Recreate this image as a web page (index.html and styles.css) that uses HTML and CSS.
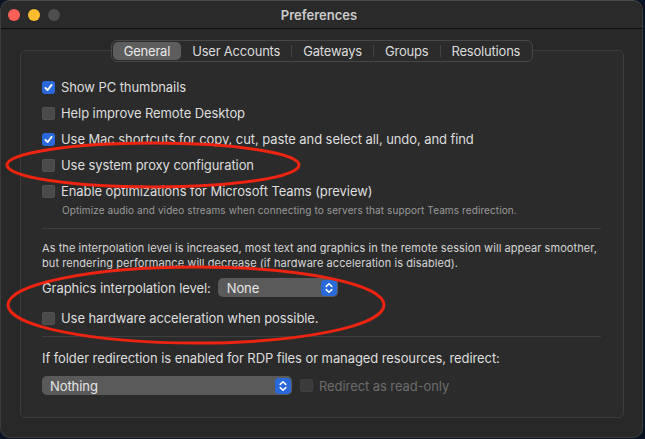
FILE: index.html
```html
<!DOCTYPE html>
<html>
<head>
<meta charset="utf-8">
<link rel="stylesheet" href="styles.css">
</head>
<body>
<div class="window">
  <div class="titlebar">
    <div class="lights">
      <span class="light red"></span>
      <span class="light yellow"></span>
      <span class="light gray"></span>
    </div>
    <div class="title">Preferences</div>
  </div>
  <div class="content">
    <div class="box">
      <div class="tabs">
        <div class="seg active">General</div>
        <div class="seg">User Accounts</div>
        <div class="sep"></div>
        <div class="seg">Gateways</div>
        <div class="sep"></div>
        <div class="seg">Groups</div>
        <div class="sep"></div>
        <div class="seg">Resolutions</div>
      </div>
      <div class="opts">
        <div class="row"><span class="cb on"><svg viewBox="0 0 14 14"><path d="M3.6 7.4 L6 9.8 L10.4 4.2" fill="none" stroke="#fff" stroke-width="1.9" stroke-linecap="round" stroke-linejoin="round"/></svg></span><span>Show PC thumbnails</span></div>
        <div class="row"><span class="cb"></span><span>Help improve Remote Desktop</span></div>
        <div class="row"><span class="cb on"><svg viewBox="0 0 14 14"><path d="M3.6 7.4 L6 9.8 L10.4 4.2" fill="none" stroke="#fff" stroke-width="1.9" stroke-linecap="round" stroke-linejoin="round"/></svg></span><span>Use Mac shortcuts for copy, cut, paste and select all, undo, and find</span></div>
        <div class="row"><span class="cb"></span><span>Use system proxy configuration</span></div>
        <div class="row"><span class="cb"></span><span>Enable optimizations for Microsoft Teams (preview)</span></div>
        <div class="sub">Optimize audio and video streams when connecting to servers that support Teams redirection.</div>
      </div>
      <div class="rule"></div>
      <p class="para">As the interpolation level is increased, most text and graphics in the remote session will appear smoother, but rendering performance will decrease (if hardware acceleration is disabled).</p>
      <div class="interp">
        <span>Graphics interpolation level:</span>
        <div class="popup small"><span class="pv">None</span><span class="step"><svg viewBox="0 0 16 16"><path d="M5.2 6.4 L8 3.8 L10.8 6.4 M5.2 9.6 L8 12.2 L10.8 9.6" fill="none" stroke="#fff" stroke-width="1.5" stroke-linecap="round" stroke-linejoin="round"/></svg></span></div>
      </div>
      <div class="row hw"><span class="cb"></span><span>Use hardware acceleration when possible.</span></div>
      <div class="rule r2"></div>
      <div class="folder">If folder redirection is enabled for RDP files or managed resources, redirect:</div>
      <div class="frow">
        <div class="popup wide"><span class="pv">Nothing</span><span class="step"><svg viewBox="0 0 16 16"><path d="M5.2 6.4 L8 3.8 L10.8 6.4 M5.2 9.6 L8 12.2 L10.8 9.6" fill="none" stroke="#fff" stroke-width="1.5" stroke-linecap="round" stroke-linejoin="round"/></svg></span></div>
        <span class="cb dis"></span><span class="dislabel">Redirect as read-only</span>
      </div>
    </div>
  </div>
</div>
<svg class="marks" width="645" height="439" viewBox="0 0 645 439">
  <ellipse cx="153" cy="165" rx="146" ry="22" fill="none" stroke="#ec2410" stroke-width="3"/>
  <ellipse cx="196" cy="305" rx="188" ry="38" fill="none" stroke="#ec2410" stroke-width="3"/>
</svg>
</body>
</html>
```
FILE: styles.css
```css
html, body {
  margin: 0;
  padding: 0;
  background: #0b1424;
  width: 645px;
  height: 439px;
  overflow: hidden;
  font-family: Inter, "Noto Sans", sans-serif;
  color: #dedede;
  letter-spacing: -0.08px;
}
.window {
  width: 641px;
  height: 436px;
  background: #282828;
  border: 1px solid #3c3c3c;
  border-top-color: #4a4a4a;
  border-radius: 10px;
  box-sizing: content-box;
  overflow: hidden;
}
.titlebar {
  height: 27px;
  border-bottom: 1px solid #0e0e0e;
  display: flex;
  align-items: center;
  position: relative;
  background: #2a2a2a;
}
.lights {
  display: flex;
  gap: 8px;
  padding-left: 7px;
}
.light {
  width: 12px;
  height: 12px;
  border-radius: 50%;
  display: block;
}
.red { background: #fe5f57; }
.yellow { background: #febc2e; }
.gray { background: #4e4e4e; }
.title {
  flex: 1;
  text-align: center;
  font-size: 13px;
  font-weight: 600;
  color: #cbcbcb;
  margin-left: -60px;
  padding-right: 4px;
  letter-spacing: 0;
}
.content {
  padding: 21px 18px 0 19px;
}
.box {
  border: 1px solid #3b3b3b;
  border-radius: 5px;
  background: #2b2b2b;
  height: 366px;
  padding: 0 21px;
}
.tabs {
  display: flex;
  justify-content: center;
  align-items: center;
  margin: -11px auto 0;
  width: max-content;
  height: 20px;
  border: 1px solid #474747;
  border-radius: 6px;
  background: #2b2b2b;
  padding: 0 1px;
  font-size: 13px;
  color: #dcdcdc;
  letter-spacing: -0.2px;
}
.seg {
  padding: 0 11px;
  height: 20px;
  line-height: 20px;
  border-radius: 5px;
}
.seg.active {
  background: #5d5d5d;
  color: #e8e8e8;
  height: 18px;
  line-height: 18px;
}
.sep {
  width: 1px;
  height: 12px;
  background: #434343;
}
.opts {
  padding-top: 12px;
}
.row {
  display: flex;
  align-items: center;
  height: 26px;
  font-size: 13px;
  gap: 6px;
}
.cb {
  width: 13px;
  height: 13px;
  border-radius: 3px;
  background: #4a4a4a;
  box-shadow: inset 0 0 0 0.5px #5a5a5a;
  display: inline-flex;
  flex: none;
}
.cb.on {
  background: #2a69da;
  box-shadow: none;
}
.cb svg {
  width: 13px;
  height: 13px;
}
.sub {
  font-size: 10px;
  letter-spacing: 0.1px;
  color: #9a9a9a;
  margin: 0 0 0 20px;
  height: 16px;
}
.rule {
  height: 1px;
  background: #3e3e3e;
  margin-top: 8px;
  margin-right: 1px;
}
.para {
  margin: 12px 0 0;
  font-size: 11px;
  line-height: 15px;
  letter-spacing: 0.07px;
  color: #d6d6d6;
}
.interp {
  display: flex;
  align-items: center;
  gap: 7px;
  font-size: 13px;
  margin-top: 7px;
  height: 19px;
}
.popup {
  height: 19px;
  border-radius: 5px;
  background: #5a5a5a;
  display: flex;
  align-items: center;
  justify-content: space-between;
  padding: 0 1px 0 9px;
  box-sizing: border-box;
  font-size: 13px;
  color: #e6e6e6;
}
.popup.small { width: 120px; }
.popup.wide { width: 250px; padding-left: 8px; }
.step {
  width: 16px;
  height: 16px;
  border-radius: 4px;
  background: #2a69da;
  display: flex;
}
.step svg { width: 16px; height: 16px; }
.hw {
  margin-top: 8px;
}
.r2 {
  margin-top: 5px;
}
.folder {
  font-size: 13px;
  margin-top: 13px;
  height: 17px;
  line-height: 17px;
}
.frow {
  display: flex;
  align-items: center;
  margin-top: 9px;
  height: 19px;
  font-size: 13px;
}
.cb.dis {
  margin-left: 8px;
  background: #3b3b3b;
  box-shadow: inset 0 0 0 0.5px #444;
}
.dislabel {
  margin-left: 6px;
  color: #6c6c6c;
}
.marks {
  position: absolute;
  left: 0;
  top: 0;
  pointer-events: none;
}
```
